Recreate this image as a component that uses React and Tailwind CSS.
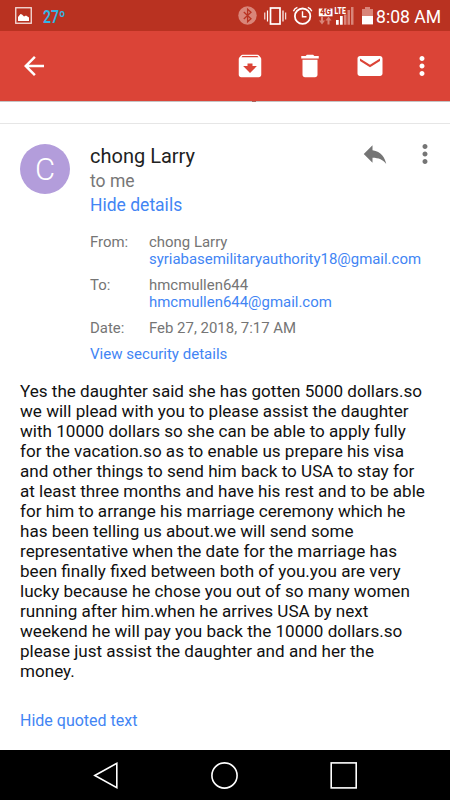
const BODY_LINES = [
  'Yes the daughter said she has gotten 5000 dollars.so',
  'we will plead with you to please assist the daughter',
  'with 10000 dollars so she can be able to apply fully',
  'for the vacation.so as to enable us prepare his visa',
  'and other things to send him back to USA to stay for',
  'at least three months and have his rest and to be able',
  'for him to arrange his marriage ceremony which he',
  'has been telling us about.we will send some',
  'representative when the date for the marriage has',
  'been finally fixed between both of you.you are very',
  'lucky because he chose you out of so many women',
  'running after him.when he arrives USA by next',
  'weekend he will pay you back the 10000 dollars.so',
  'please just assist the daughter and and her the',
  'money.',
];

function Icon({ d, className = '' }) {
  return (
    <svg viewBox="0 0 24 24" className={`size-[30px] shrink-0 fill-current ${className}`}>
      <path d={d} />
    </svg>
  );
}

const ICONS = {
  back: 'M20 11H7.83l5.59-5.59L12 4l-8 8 8 8 1.41-1.41L7.83 13H20v-2z',
  archive:
    'M20.54 5.23l-1.39-1.68C18.88 3.21 18.47 3 18 3H6c-.47 0-.88.21-1.16.55L3.46 5.23C3.17 5.57 3 6.02 3 6.5V19c0 1.1.9 2 2 2h14c1.1 0 2-.9 2-2V6.5c0-.48-.17-.93-.46-1.27zM12 17.5L6.5 12H10v-2h4v2h3.5L12 17.5zM5.12 5l.81-1h12l.94 1H5.12z',
  trash: 'M6 19c0 1.1.9 2 2 2h8c1.1 0 2-.9 2-2V7H6v12zM19 4h-3.5l-1-1h-5l-1 1H5v2h14V4z',
  mail: 'M20 4H4c-1.1 0-1.99.9-1.99 2L2 18c0 1.1.9 2 2 2h16c1.1 0 2-.9 2-2V6c0-1.1-.9-2-2-2zm0 4l-8 5-8-5V6l8 5 8-5v2z',
  more: 'M12 8c1.1 0 2-.9 2-2s-.9-2-2-2-2 .9-2 2 .9 2 2 2zm0 2c-1.1 0-2 .9-2 2s.9 2 2 2 2-.9 2-2-.9-2-2-2zm0 6c-1.1 0-2 .9-2 2s.9 2 2 2 2-.9 2-2-.9-2-2-2z',
  reply: 'M10 9V5l-7 7 7 7v-4.1c5 0 8.500 1.600 11 5.100-1-5-4-10-11-11z',
};

function StatusBar() {
  return (
    <div className="flex h-[31px] items-center bg-[#b93221] text-white">
      <svg viewBox="0 0 17 17" className="ml-[15px] size-[17px]">
        <rect x="0.75" y="0.75" width="15.500" height="15.500" fill="none" stroke="#fff" strokeOpacity="0.85" strokeWidth="1.300" />
        <path d="M3 14V10l2.500-3 1.500.5 2 2 2-1 3 2v3.500z" fill="#fff" />
      </svg>
      <span className="ml-[11px] mt-[2px] w-[22px] origin-left scale-x-[0.8] whitespace-nowrap text-[17.500px] leading-5 font-semibold text-[#33b5e5]">27º</span>
      <svg viewBox="238 0 138 31" className="ml-auto h-[31px] w-[138px]">
        <circle cx="247.500" cy="15.500" r="9.200" fill="#d98579" />
        <path d="M243.800 12l7.200 6.800-3.400 3V9.200l3.400 3-7.200 6.800" fill="none" stroke="#b93221" strokeWidth="1.300" />
        <g fill="none" stroke="#fff">
          <rect x="270.500" y="8" width="9.500" height="16" strokeWidth="1.700" />
          <path d="M267.500 10.500v11M283 10.500v11" strokeWidth="1.200" />
          <path d="M264.800 12.500v7M285.700 12.500v7" strokeWidth="1" />
          <circle cx="302.600" cy="16.200" r="7.700" strokeWidth="1.800" />
          <path d="M302.500 11.300v5.500h4M293.400 11.300c.8-2 2.200-3.400 4-4M311.800 11.300c-.8-2-2.200-3.400-4-4" strokeWidth="1.400" />
        </g>
        <rect x="318.800" y="8.500" width="13.700" height="7.800" fill="#fff" />
        <text x="320.200" y="15.300" fontSize="8.500" fontWeight="800" fill="#b93221" textLength="10.800" lengthAdjust="spacingAndGlyphs">4G</text>
        <path d="M321 16.500h2v4h2l-3 4-3-4h2zM327.500 24.500h2v-4h2l-3-4-3 4h2z" fill="#d98579" />
        <text x="334.600" y="13.600" fontSize="8.500" fontWeight="800" fill="#fff" textLength="11.200" lengthAdjust="spacingAndGlyphs">LTE</text>
        <path d="M336 20h2.700v4.700h-2.700zM340 16h2.700v8.700h-2.700z" fill="#fff" />
        <path d="M344 14.500h2.500v10.200h-2.500zM347.500 10h2.500v14.700h-2.500zM351 7h2.500v17.700h-2.500z" fill="#d98579" />
        <path d="M365 7h5v2h3v7.500h-11V9h3z" fill="#d98579" />
        <path d="M362 16h11v8.400h-11z" fill="#fff" />
      </svg>
      <span className="mt-[2px] w-[74px] whitespace-nowrap text-[17.600px] leading-5">8:08 AM</span>
    </div>
  );
}

function Toolbar() {
  return (
    <header className="flex h-[70px] items-center bg-[#db4437] pl-[19px] pr-[13px] text-white">
      <Icon d={ICONS.back} />
      <div className="ml-auto flex gap-[30px]">
        <Icon d={ICONS.archive} />
        <Icon d={ICONS.trash} />
        <Icon d={ICONS.mail} />
        <Icon d={ICONS.more} className="-ml-[8px]" />
      </div>
    </header>
  );
}

function DetailRow({ label, name, email }) {
  return (
    <div className="flex">
      <span className="w-[59px]">{label}</span>
      <div>
        <p>{name}</p>
        {email && <p className="text-[#4285f4]">{email}</p>}
      </div>
    </div>
  );
}

export default function App() {
  return (
    <div className="flex h-[800px] w-[450px] flex-col overflow-hidden bg-white font-[Roboto,sans-serif]">
      <StatusBar />
      <Toolbar />
      <div className="flex h-[23px] flex-col border-t border-b border-t-[#c4c4c4] border-b-[#e6e6e6]">
        <div className="-mt-px ml-[252px] h-px w-[4px] bg-[#a5655f]" />
      </div>
      <main className="flex flex-1 flex-col">
        <section className="flex pt-[20px] pl-[20px]">
          <div className="flex size-[50px] shrink-0 items-center justify-center rounded-full bg-[#b39ddb] text-[31px] leading-9 font-light text-white">
            <span className="mt-[2px]">C</span>
          </div>
          <div className="ml-[20px] whitespace-nowrap">
            <h1 className="text-[20px] leading-6 text-[#212121]">chong Larry</h1>
            <p className="mt-[1px] text-[17.500px] leading-6 text-[#777]">to me</p>
            <p className="text-[17.500px] leading-6 text-[#4285f4]">Hide details</p>
          </div>
          <div className="ml-auto flex pr-[10px] text-[#757575]">
            <Icon d={ICONS.reply} className="mr-[20px] -mt-[5px]" />
            <Icon d={ICONS.more} className="-mt-[5px]" />
          </div>
        </section>
        <section className="mt-[17px] flex flex-col gap-[9px] pl-[90px] text-[14.950px] leading-[17px] whitespace-nowrap text-[#757575]">
          <DetailRow label="From:" name="chong Larry" email="syriabasemilitaryauthority18@gmail.com" />
          <DetailRow label="To:" name="hmcmullen644" email="hmcmullen644@gmail.com" />
          <DetailRow label="Date:" name="Feb 27, 2018, 7:17 AM" />
          <p className="text-[15.050px] text-[#4285f4]">View security details</p>
        </section>
        <section className="mt-[18px] pl-[20px] text-[17.080px] leading-5 whitespace-nowrap text-[#111]">
          {BODY_LINES.map((line) => (
            <p key={line}>{line}</p>
          ))}
        </section>
        <p className="mt-[30px] pl-[20px] text-[16px] leading-5 text-[#4285f4]">Hide quoted text</p>
      </main>
      <nav className="h-[50px] shrink-0 bg-black">
        <svg viewBox="0 0 450 50" className="h-[50px] w-[450px]" fill="none" stroke="#fff" strokeWidth="1.600">
          <path d="M94.800 25.500L116.800 13.300v24.400z" />
          <circle cx="224.500" cy="25.500" r="12.600" />
          <rect x="331.200" y="12.900" width="25" height="25" />
        </svg>
      </nav>
    </div>
  );
}
